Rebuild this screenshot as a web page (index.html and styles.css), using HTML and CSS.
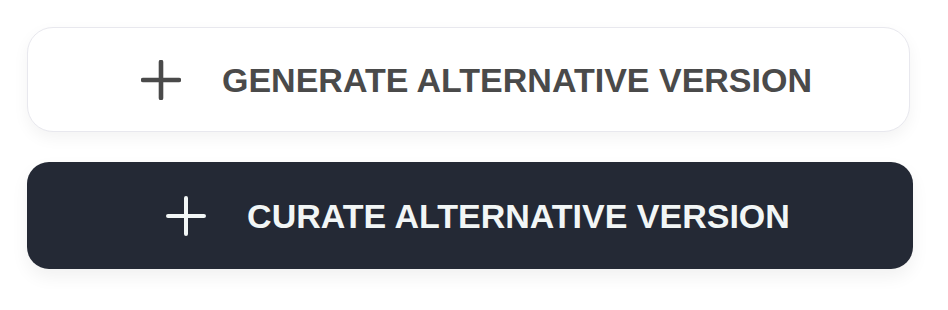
FILE: index.html
```html
<!DOCTYPE html>
<html>
<head>
<meta charset="utf-8">
<link rel="stylesheet" href="styles.css">
</head>
<body>
<div class="stack">
  <button class="btn btn-light">
    <svg class="icon" viewBox="0 0 40 40" width="40" height="40"><path d="M20 2V38M2 20H38" stroke="currentColor" stroke-width="4.6" stroke-linecap="round" fill="none"/></svg>
    <span class="label">GENERATE ALTERNATIVE VERSION</span>
  </button>
  <button class="btn btn-dark">
    <svg class="icon" viewBox="0 0 40 40" width="40" height="40"><path d="M20 2V38M2 20H38" stroke="currentColor" stroke-width="4" stroke-linecap="round" fill="none"/></svg>
    <span class="label">CURATE ALTERNATIVE VERSION</span>
  </button>
</div>
</body>
</html>
```
FILE: styles.css
```css
html, body {
  margin: 0;
  background: #ffffff;
}
.stack {
  display: flex;
  flex-direction: column;
  gap: 30px;
  padding: 27px 35px 20px 27px;
  width: 886px;
}
.btn {
  display: flex;
  align-items: center;
  justify-content: center;
  gap: 41px;
  padding: 0 0 0 16px;
  font-family: "Liberation Sans", Arial, sans-serif;
  font-weight: 700;
  font-size: 34px;
  letter-spacing: 0;
  cursor: pointer;
}
.btn-light {
  width: 883px;
  height: 105px;
  background: #ffffff;
  color: #4a4a4a;
  border: 1.5px solid #e8e8ee;
  border-radius: 26px;
  box-shadow: 0 6px 16px rgba(0, 0, 0, 0.05);
}
.btn-dark {
  width: 886px;
  height: 107px;
  background: #242935;
  color: #f2f6f6;
  border: none;
  border-radius: 22px;
  box-shadow: 0 8px 18px rgba(0, 0, 0, 0.06);
}
.icon {
  flex: none;
  display: block;
}
.label {
  line-height: 1;
}
```
